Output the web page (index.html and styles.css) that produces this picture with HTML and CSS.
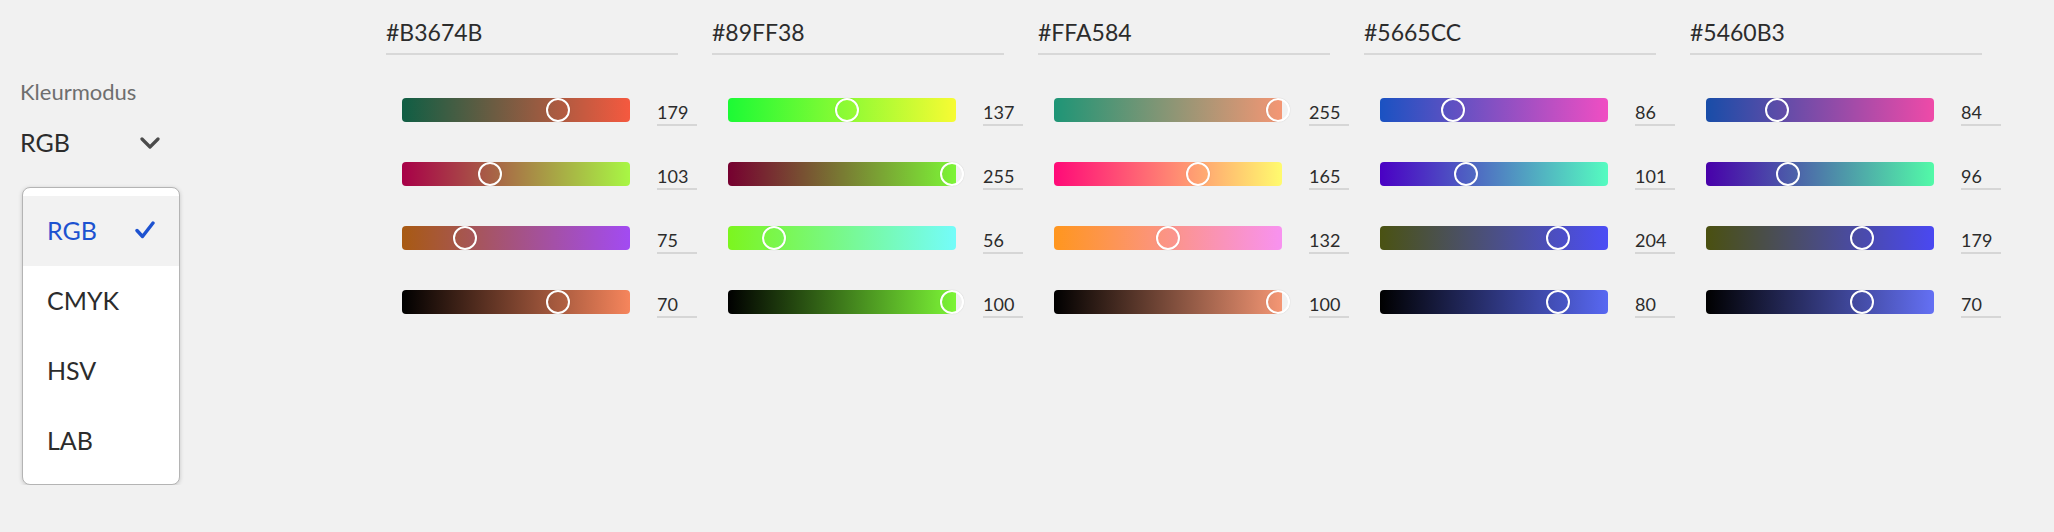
FILE: index.html
```html
<!DOCTYPE html>
<html lang="nl">
<head>
<meta charset="utf-8">
<title>Kleurmodus</title>
<link rel="stylesheet" href="styles.css">
</head>
<body>
<div class="app">
  <aside class="mode-panel">
    <div class="mode-label">Kleurmodus</div>
    <div class="picker">
      <span>RGB</span>
      <svg class="chevron" width="20" height="12" viewBox="0 0 20 12"><polyline points="2,2 10,10 18,2" fill="none" stroke="#4b4b4b" stroke-width="3.2" stroke-linecap="round" stroke-linejoin="round"/></svg>
    </div>
    <div class="menu">
      <div class="menu-item selected">
        <span>RGB</span>
        <svg class="check" width="20" height="18" viewBox="0 0 20 18"><polyline points="2,9.5 7.5,15.5 18,2" fill="none" stroke="#1d52d0" stroke-width="3.4" stroke-linecap="round" stroke-linejoin="round"/></svg>
      </div>
      <div class="menu-item"><span>CMYK</span></div>
      <div class="menu-item"><span>HSV</span></div>
      <div class="menu-item"><span>LAB</span></div>
    </div>
  </aside>

  <main class="columns">
    <section class="col">
      <div class="hex">#B3674B</div>
      <div class="sliders">
        <div class="slider-row"><div class="track" style="background:linear-gradient(to right,#0F5E44,#F5593F)"><span class="handle" style="left:144px"></span></div><div class="value">179</div></div>
        <div class="slider-row"><div class="track" style="background:linear-gradient(to right,#A80048,#A8F744)"><span class="handle" style="left:76px"></span></div><div class="value">103</div></div>
        <div class="slider-row"><div class="track" style="background:linear-gradient(to right,#A85A12,#A24BF2)"><span class="handle" style="left:51px"></span></div><div class="value">75</div></div>
        <div class="slider-row"><div class="track" style="background:linear-gradient(to right,#000000,#F6855C)"><span class="handle" style="left:143.6px"></span></div><div class="value">70</div></div>
      </div>
    </section>

    <section class="col">
      <div class="hex">#89FF38</div>
      <div class="sliders">
        <div class="slider-row"><div class="track" style="background:linear-gradient(to right,#1CFA35,#F7FB33)"><span class="handle" style="left:106.5px"></span></div><div class="value">137</div></div>
        <div class="slider-row"><div class="track" style="background:linear-gradient(to right,#760030,#7CF536)"><span class="handle" style="left:212px"></span></div><div class="value">255</div></div>
        <div class="slider-row"><div class="track" style="background:linear-gradient(to right,#7CF51E,#74FCFA)"><span class="handle" style="left:34px"></span></div><div class="value">56</div></div>
        <div class="slider-row"><div class="track" style="background:linear-gradient(to right,#000000,#7CF536)"><span class="handle" style="left:212px"></span></div><div class="value">100</div></div>
      </div>
    </section>

    <section class="col">
      <div class="hex">#FFA584</div>
      <div class="sliders">
        <div class="slider-row"><div class="track" style="background:linear-gradient(to right,#1E9576,#F49674)"><span class="handle" style="left:212px"></span></div><div class="value">255</div></div>
        <div class="slider-row"><div class="track" style="background:linear-gradient(to right,#FF0A78,#FFFB6E)"><span class="handle" style="left:131.5px"></span></div><div class="value">165</div></div>
        <div class="slider-row"><div class="track" style="background:linear-gradient(to right,#FF961E,#F892F0)"><span class="handle" style="left:102px"></span></div><div class="value">132</div></div>
        <div class="slider-row"><div class="track" style="background:linear-gradient(to right,#000000,#F49674)"><span class="handle" style="left:212px"></span></div><div class="value">100</div></div>
      </div>
    </section>

    <section class="col">
      <div class="hex">#5665CC</div>
      <div class="sliders">
        <div class="slider-row"><div class="track" style="background:linear-gradient(to right,#1A52C2,#F04EC3)"><span class="handle" style="left:61px"></span></div><div class="value">86</div></div>
        <div class="slider-row"><div class="track" style="background:linear-gradient(to right,#4A00C4,#55FCC0)"><span class="handle" style="left:74.3px"></span></div><div class="value">101</div></div>
        <div class="slider-row"><div class="track" style="background:linear-gradient(to right,#4A5212,#4C4DF6)"><span class="handle" style="left:166.4px"></span></div><div class="value">204</div></div>
        <div class="slider-row"><div class="track" style="background:linear-gradient(to right,#000000,#5868F2)"><span class="handle" style="left:166.4px"></span></div><div class="value">80</div></div>
      </div>
    </section>

    <section class="col">
      <div class="hex">#5460B3</div>
      <div class="sliders">
        <div class="slider-row"><div class="track" style="background:linear-gradient(to right,#184DA8,#EF4AA8)"><span class="handle" style="left:59.1px"></span></div><div class="value">84</div></div>
        <div class="slider-row"><div class="track" style="background:linear-gradient(to right,#4800AA,#52FAA8)"><span class="handle" style="left:69.8px"></span></div><div class="value">96</div></div>
        <div class="slider-row"><div class="track" style="background:linear-gradient(to right,#4A5010,#4A48F2)"><span class="handle" style="left:144px"></span></div><div class="value">179</div></div>
        <div class="slider-row"><div class="track" style="background:linear-gradient(to right,#000000,#6470F4)"><span class="handle" style="left:143.6px"></span></div><div class="value">70</div></div>
      </div>
    </section>
  </main>
</div>
</body>
</html>
```
FILE: styles.css
```css
html, body {
  margin: 0;
  padding: 0;
}

body {
  background: #f1f1f1;
  font-family: Lato, "Open Sans", "Noto Sans", sans-serif;
  color: #2c2c2c;
}

.app {
  display: flex;
  align-items: flex-start;
  padding-left: 20px;
}

/* ---------- left panel ---------- */
.mode-panel {
  flex: none;
  width: 366px;
  padding-top: 78px;
}

.mode-label {
  font-size: 22px;
  line-height: 28px;
  color: #6e6e6e;
}

.picker {
  margin-top: 20px;
  width: 140px;
  height: 32px;
  display: flex;
  align-items: center;
  justify-content: space-between;
  font-size: 25px;
  line-height: 32px;
  color: #2c2c2c;
}

.chevron {
  display: block;
  margin-top: 1px;
}

.menu {
  margin-top: 29px;
  margin-left: 2px;
  width: 158px;
  box-sizing: border-box;
  padding: 8px 0;
  background: #ffffff;
  border: 1px solid #b4b4b4;
  border-radius: 8px;
  box-shadow: 0 1px 4px rgba(0, 0, 0, 0.18);
}

.menu-item {
  height: 70px;
  box-sizing: border-box;
  padding: 0 24px 3px 24px;
  display: flex;
  align-items: center;
  justify-content: space-between;
  font-size: 25px;
  line-height: 30px;
  color: #2c2c2c;
}

.menu-item.selected {
  background: #f2f2f2;
  color: #1d52d0;
}

.check {
  display: block;
}

/* ---------- colour columns ---------- */
.columns {
  display: flex;
  gap: 15px;
}

.col {
  flex: none;
  width: 311px;
}

.hex {
  margin-top: 16px;
  width: 292px;
  font-size: 23px;
  line-height: 32px;
  padding-bottom: 5px;
  border-bottom: 2px solid #d8d8d8;
  color: #2c2c2c;
}

.sliders {
  margin-top: 43px;
  display: flex;
  flex-direction: column;
  gap: 40px;
}

.slider-row {
  display: flex;
  align-items: flex-start;
  height: 24px;
  padding-left: 16px;
}

.track {
  position: relative;
  flex: none;
  width: 228px;
  height: 24px;
  border-radius: 4px;
}

.handle {
  position: absolute;
  top: 0;
  width: 24px;
  height: 24px;
  box-sizing: border-box;
  border: 2px solid #ffffff;
  border-radius: 50%;
  box-shadow: 0 0 1px rgba(0, 0, 0, 0.25);
}

.value {
  flex: none;
  margin-left: 27px;
  margin-top: 2px;
  width: 40px;
  font-size: 18px;
  line-height: 24px;
  border-bottom: 2px solid #d6d6d6;
  color: #2c2c2c;
}
```
